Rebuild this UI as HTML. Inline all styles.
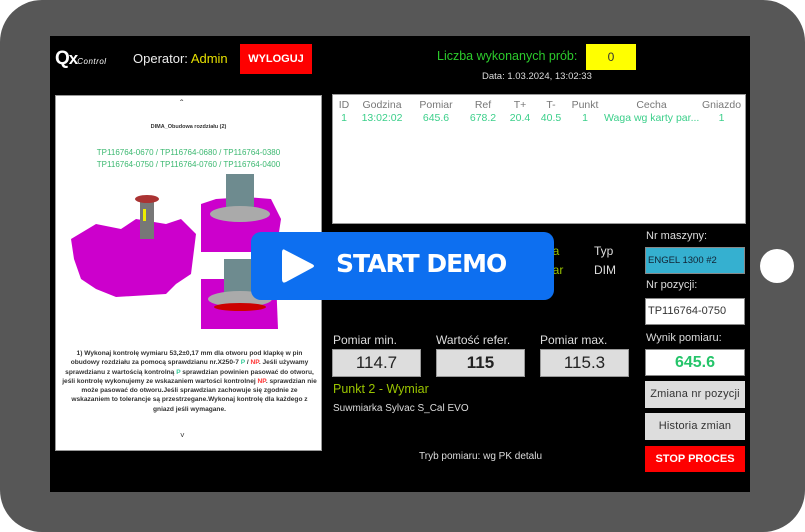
<!DOCTYPE html>
<html><head><meta charset="utf-8"><style>
*{margin:0;padding:0;box-sizing:border-box}
body{width:805px;height:532px;background:#fff;position:relative;overflow:hidden;font-family:"Liberation Sans",Arial,sans-serif}
.tab{position:absolute;left:0;top:0;width:805px;height:532px;background:#575757;border-radius:42px}
.scr{position:absolute;left:50px;top:36px;width:700px;height:456px;background:#000}
.a{position:absolute}
.home{position:absolute;left:760px;top:249px;width:34px;height:34px;border-radius:50%;background:#fff}
.lbl{color:#ddd;font-size:11px}
.box{background:#ddd;border:1px solid #999;text-align:center;color:#222;font-size:17px}
.btn{background:#ddd;color:#333;font-size:11px;text-align:center;letter-spacing:0.2px}
table{table-layout:fixed;width:410px;border-collapse:collapse}
th,td{font-weight:normal;font-size:10.5px;text-align:center;white-space:nowrap;overflow:hidden}
th{color:#777}td{color:#3bcf8a}
</style></head><body>
<div class="tab"></div>
<div class="home"></div>
<div class="scr">
 <div class="a" style="left:5px;top:12px;color:#fff;font-size:19px;font-weight:bold;letter-spacing:-1px">Q<span style="font-size:17px">x</span><span style="font-size:8px;font-style:italic;letter-spacing:0.5px;font-weight:normal">Control</span></div>
 <div class="a" style="left:83px;top:15px;color:#eee;font-size:13px">Operator: <span style="color:#e6e000">Admin</span></div>
 <div class="a" style="left:190px;top:8px;width:72px;height:30px;background:#fe0000;color:#fff;font-size:11px;font-weight:bold;text-align:center;line-height:30px">WYLOGUJ</div>
 <div class="a" style="left:387px;top:13px;color:#2ccb2c;font-size:12.5px">Liczba wykonanych prób:</div>
 <div class="a" style="left:536px;top:8px;width:50px;height:26px;background:#ff0;color:#333;font-size:12px;text-align:center;line-height:26px">0</div>
 <div class="a" style="left:432px;top:35px;color:#ddd;font-size:9.5px">Data: 1.03.2024, 13:02:33</div>

 <div class="a" style="left:5px;top:59px;width:267px;height:356px;background:#fff;border:1px solid #999">
  <div class="a" style="left:124px;top:3px;font-size:10px;color:#333">ˆ</div>
  <div class="a" style="left:0;width:265px;top:28px;text-align:center;font-size:5.5px;color:#333;font-weight:bold">DIMA_Obudowa rozdziału (2)</div>
  <div class="a" style="left:0;width:265px;top:51px;text-align:center;font-size:8px;color:#3bb870;line-height:12px">TP116764-0670 / TP116764-0680 / TP116764-0380<br>TP116764-0750 / TP116764-0760 / TP116764-0400</div>
  <svg class="a" style="left:0;top:78px" width="265" height="200">
   <path d="M15 65 L40 50 L65 55 L80 45 L110 50 L125 45 L140 60 L135 100 L120 110 L110 120 L60 123 L40 115 L25 105 L18 85Z" fill="#cc00cc"/>
   <rect x="84" y="25" width="14" height="40" fill="#777"/><ellipse cx="91" cy="25" rx="12" ry="4" fill="#a33"/><rect x="87" y="35" width="3" height="12" fill="#ee0"/>
   <path d="M145 30 L160 25 L190 23 L215 25 L225 45 L220 78 L145 78Z" fill="#cc00cc"/>
   <rect x="170" y="0" width="28" height="38" fill="#6e8b8f"/><ellipse cx="184" cy="40" rx="30" ry="8" fill="#aaa"/>
   <path d="M145 105 L220 105 L222 155 L145 155Z" fill="#cc00cc"/>
   <rect x="168" y="85" width="30" height="40" fill="#6e8b8f"/><ellipse cx="184" cy="125" rx="32" ry="8" fill="#aaa"/><ellipse cx="184" cy="133" rx="26" ry="4" fill="#c00"/>
  </svg>
  <div class="a" style="left:6px;width:255px;top:253px;text-align:center;font-size:6.6px;color:#333;font-weight:bold;line-height:9.3px">1) Wykonaj kontrolę wymiaru 53,2±0,17 mm dla otworu pod klapkę w pin obudowy rozdziału za pomocą sprawdzianu nr.X250-7 <span style="color:#3c9">P</span> / <span style="color:#f33">NP</span>. Jeśli używamy sprawdzianu z wartością kontrolną <span style="color:#3c9">P</span> sprawdzian powinien pasować do otworu, jeśli kontrolę wykonujemy ze wskazaniem wartości kontrolnej <span style="color:#f33">NP</span>. sprawdzian nie może pasować do otworu.Jeśli sprawdzian zachowuje się zgodnie ze wskazaniem to tolerancje są przestrzegane.Wykonaj kontrolę dla każdego z gniazd jeśli wymagane.</div>
  <div class="a" style="left:124px;top:335px;font-size:8px;color:#333">˅</div>
 </div>

 <div class="a" style="left:282px;top:58px;width:414px;height:130px;background:#fff;border:1px solid #999">
  <table style="margin-top:2px;margin-left:1px"><colgroup><col style="width:20px"><col style="width:56px"><col style="width:52px"><col style="width:42px"><col style="width:32px"><col style="width:30px"><col style="width:38px"><col style="width:95px"><col style="width:45px"></colgroup>
  <tr style="height:15px"><th>ID</th><th>Godzina</th><th>Pomiar</th><th>Ref</th><th>T+</th><th>T-</th><th>Punkt</th><th>Cecha</th><th>Gniazdo</th></tr>
  <tr><td>1</td><td>13:02:02</td><td>645.6</td><td>678.2</td><td>20.4</td><td>40.5</td><td>1</td><td>Waga wg karty par...</td><td>1</td></tr></table>
 </div>

 <div class="a" style="left:490px;top:206px;color:#9ac400;font-size:12px;line-height:19px">cha<br>miar</div>
 <div class="a" style="left:544px;top:206px;color:#ddd;font-size:12px;line-height:19px">Typ<br>DIM</div>
 <div class="a lbl" style="left:596px;top:194px">Nr maszyny:</div>
 <div class="a" style="left:595px;top:211px;width:100px;height:27px;background:#35b0d0;border:1px solid #888;font-size:9.5px;color:#123;line-height:25px;padding-left:2px">ENGEL 1300 #2</div>
 <div class="a lbl" style="left:596px;top:243px">Nr pozycji:</div>
 <div class="a" style="left:595px;top:262px;width:100px;height:27px;background:#fff;border:1px solid #888;font-size:11px;color:#333;line-height:25px;padding-left:2px">TP116764-0750</div>
 <div class="a lbl" style="left:596px;top:296px">Wynik pomiaru:</div>
 <div class="a" style="left:595px;top:313px;width:100px;height:27px;background:#fff;border:1px solid #888;font-size:16px;color:#25c46a;font-weight:bold;text-align:center;line-height:25px">645.6</div>
 <div class="a btn" style="left:595px;top:345px;width:100px;height:27px;line-height:27px">Zmiana nr pozycji</div>
 <div class="a btn" style="left:595px;top:377px;width:100px;height:27px;line-height:27px">Historia zmian</div>
 <div class="a" style="left:595px;top:410px;width:100px;height:26px;background:#fe0000;color:#fff;font-size:11px;font-weight:bold;text-align:center;line-height:26px">STOP PROCES</div>

 <div class="a" style="left:283px;top:297px;color:#ddd;font-size:12px">Pomiar min.</div>
 <div class="a" style="left:386px;top:297px;color:#ddd;font-size:12px">Wartość refer.</div>
 <div class="a" style="left:490px;top:297px;color:#ddd;font-size:12px">Pomiar max.</div>
 <div class="a box" style="left:282px;top:313px;width:89px;height:28px;line-height:26px">114.7</div>
 <div class="a box" style="left:386px;top:313px;width:89px;height:28px;line-height:26px;font-weight:bold">115</div>
 <div class="a box" style="left:490px;top:313px;width:89px;height:28px;line-height:26px">115.3</div>
 <div class="a" style="left:283px;top:346px;color:#9ac400;font-size:12.5px">Punkt 2 - Wymiar</div>
 <div class="a" style="left:283px;top:367px;color:#ddd;font-size:10px">Suwmiarka Sylvac S_Cal EVO</div>
 <div class="a" style="left:369px;top:415px;color:#ddd;font-size:10px">Tryb pomiaru: wg PK detalu</div>
</div>

<div class="a" style="left:251px;top:232px;width:303px;height:68px;background:#0d6ff0;border-radius:10px">
 <svg class="a" style="left:29px;top:14px" width="36" height="40"><path d="M5 4 Q2 2 2 7 L2 33 Q2 38 6 36 L32 22 Q36 20 32 18Z" fill="#fff"/></svg>
 <div class="a" style="left:85px;top:17px;color:#fff;font-size:25px;font-weight:bold;font-family:'DejaVu Sans',sans-serif;letter-spacing:-1px">START DEMO</div>
</div>
</body></html>
